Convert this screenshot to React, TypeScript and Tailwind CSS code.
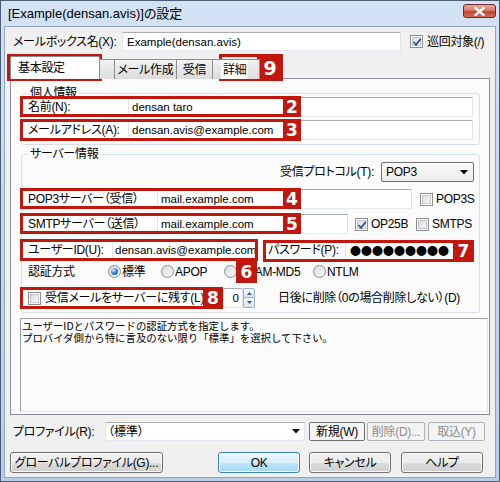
import React from 'react';

const red = 'border-[#c2170d]';

const Box: React.FC<{ className: string }> = ({ className }) => (
  <div className={`pointer-events-none absolute border-[3px] ${red} ${className}`} />
);

const Badge: React.FC<{ n: string; className: string }> = ({ n, className }) => (
  <div
    className={`pointer-events-none absolute flex items-center justify-center bg-[#c2170d] text-white font-bold tracking-normal [font-family:'DejaVu_Sans',sans-serif] ${className}`}
  >
    {n}
  </div>
);

const CheckBox: React.FC<{ checked?: boolean }> = ({ checked }) => (
  <div className="relative h-[13px] w-[13px] shrink-0 border border-[#8f8f8f] bg-white p-[1px]">
    <div className="h-full w-full border border-[#c3c7cc] bg-gradient-to-br from-[#dadcdf] to-[#f9f9f9]" />
    {checked && (
      <svg className="absolute left-[1px] top-[1px]" width="10" height="10" viewBox="0 0 10 10">
        <path d="M1.5 5 L4 7.8 L8.8 1.8" fill="none" stroke="#2b4f9e" strokeWidth="1.8" />
      </svg>
    )}
  </div>
);

const Radio: React.FC<{ checked?: boolean }> = ({ checked }) => (
  <div className="flex h-[13px] w-[13px] shrink-0 items-center justify-center rounded-full border border-[#8a8c8e] bg-gradient-to-br from-[#d9dadc] to-[#fbfbfb]">
    {checked && (
      <div className="h-[7px] w-[7px] rounded-full bg-[radial-gradient(circle_at_35%_30%,#d6f0ff_0%,#3d8fe0_45%,#0c3f8c_100%)]" />
    )}
  </div>
);

const Field: React.FC<{ className?: string; children?: React.ReactNode }> = ({ className, children }) => (
  <div
    className={`flex h-full items-center overflow-hidden whitespace-nowrap border border-[#abadb3] border-l-[#e2e3ea] border-r-[#e2e3ea] border-b-[#e3e9ef] bg-white text-[11.5px] tracking-normal ${className ?? ''}`}
  >
    {children}
  </div>
);

const Btn: React.FC<{ className?: string; children: React.ReactNode; primary?: boolean }> = ({
  className,
  children,
  primary,
}) => (
  <div
    className={`flex items-center justify-center whitespace-nowrap rounded-[3px] border shadow-[inset_0_0_0_1px_#fcfcfc] ${
      primary
        ? 'border-[#3c7fb1] bg-[linear-gradient(#eaf6fd_0%,#d9f0fc_50%,#bee6fd_50%,#a7d9f5_100%)]'
        : 'border-[#707070] bg-[linear-gradient(#f2f2f2_0%,#ebebeb_50%,#dddddd_50%,#cfcfcf_100%)]'
    } ${className ?? ''}`}
  >
    {children}
  </div>
);

const SmallBtn: React.FC<{ children: React.ReactNode; disabled?: boolean; className?: string }> = ({
  children,
  disabled,
  className,
}) => (
  <div
    className={`flex h-[19px] items-center justify-center whitespace-nowrap rounded-[2px] border ${
      disabled ? 'border-[#adb2b5] bg-[#f4f4f4] text-[#8d8d8d]' : 'border-[#707070] bg-[#f6f6f6]'
    } ${className ?? ''}`}
  >
    {children}
  </div>
);

const Group: React.FC<{ title: string; className: string; children: React.ReactNode }> = ({
  title,
  className,
  children,
}) => (
  <div className={`relative ml-[10px] w-[459px] rounded-[3px] border border-[#d5dfe5] ${className}`}>
    <span className="absolute -top-[8px] left-[6px] bg-[#fbfbfb] px-[2px] leading-[14px]">{title}</span>
    {children}
  </div>
);

const Arrow = () => (
  <svg width="8" height="5" viewBox="0 0 8 5">
    <path d="M0 0 H8 L4 4.5 Z" fill="#000" />
  </svg>
);

export default function App() {
  return (
    <div className="relative h-[482px] w-[500px] overflow-hidden border border-[#4b5d74] bg-gradient-to-b from-[#d3e2f4] to-[#b8cde8] text-[12px] leading-[14px] tracking-[-0.3px] text-black [font-family:'Liberation_Sans','Noto_Sans_CJK_JP',sans-serif] [font-feature-settings:'palt']">
      {/* title bar */}
      <div className="flex h-[25px] items-start justify-between pl-[7px] pr-[3px]">
        <span className="mt-[5px] text-[13px] leading-[15px] tracking-normal">[Example(densan.avis)]の設定</span>
        <div className="mt-[3px] flex h-[14px] w-[33px] items-center justify-center rounded-[3px] border border-[#6e2a22] bg-[linear-gradient(#e9aaa0_0%,#d77a69_45%,#c2432e_55%,#d86a4f_100%)]">
          <svg width="11" height="9" viewBox="0 0 11 9">
            <path d="M1.5 1 L9.5 8 M9.5 1 L1.5 8" stroke="#fff" strokeWidth="2.4" strokeLinecap="square" />
          </svg>
        </div>
      </div>

      {/* body */}
      <div className="mx-[3px] h-[452px] border border-[#8ea4bf] bg-[#f0f0f0]">
        {/* mailbox name */}
        <div className="mt-[5px] flex h-[19px] items-center">
          <span className="w-[117px] whitespace-nowrap pl-[8px]">メールボックス名(X):</span>
          <Field className="w-[279px] pl-[4px]">Example(densan.avis)</Field>
          <div className="ml-[9px]">
            <CheckBox checked />
          </div>
          <span className="ml-[4px] whitespace-nowrap">巡回対象(/)</span>
        </div>

        {/* tabs */}
        <div className="relative z-10 -mb-[1px] ml-[5px] mt-[5px] flex h-[23px] items-end whitespace-nowrap">
          <div className="flex h-[23px] w-[90px] items-center rounded-t-[2px] border border-b-0 border-[#898c95] bg-white pl-[7px]">
            基本設定
          </div>
          <div className="-ml-[1px] h-[20px] w-[16px] border border-b-0 border-[#898c95] bg-[linear-gradient(#f2f2f2,#dcdcdc)]" />
          <div className="-ml-[1px] flex h-[20px] w-[63px] items-center justify-center border border-b-0 border-[#898c95] bg-[linear-gradient(#f2f2f2,#dcdcdc)]">
            メール作成
          </div>
          <div className="-ml-[1px] flex h-[20px] w-[37px] items-center justify-center border border-b-0 border-[#898c95] bg-[linear-gradient(#f2f2f2,#dcdcdc)]">
            受信
          </div>
          <div className="-ml-[1px] flex h-[20px] w-[48px] items-center border border-b-0 border-[#898c95] bg-[linear-gradient(#f2f2f2,#dcdcdc)] pl-[8px]">
            <span className="flex h-full items-center bg-white px-[2px]">詳細</span>
          </div>
        </div>

        {/* tab page */}
        <div className="ml-[5px] flex h-[337px] w-[480px] flex-col whitespace-nowrap border border-[#898c95] bg-[#fbfbfb]">
          <Group title="個人情報" className="mt-[14px] h-[52px]">
            <div className="mt-[3px] flex h-[20px]">
              <span className="flex w-[106px] items-center bg-white pl-[6px]">名前(N):</span>
              <Field className="w-[345px] pl-[3px]">densan taro</Field>
            </div>
            <div className="mt-[3px] flex h-[20px]">
              <span className="flex w-[106px] items-center bg-white pl-[6px]">メールアドレス(A):</span>
              <Field className="w-[345px] pl-[3px]">densan.avis@example.com</Field>
            </div>
          </Group>

          <Group title="サーバー情報" className="mt-[9px] h-[159px]">
            <div className="mt-[7px] flex h-[20px] items-center justify-end pr-[5px]">
              <span className="mr-[7px]">受信プロトコル(T):</span>
              <div className="flex h-[20px] w-[93px] items-center justify-between rounded-[2px] border border-[#707070] bg-[linear-gradient(#fbfbfb,#ececec)] pl-[4px] pr-[5px]">
                POP3
                <Arrow />
              </div>
            </div>

            <div className="mt-[7px] flex h-[20px] items-center">
              <span className="flex h-full w-[135px] items-center bg-white pl-[6px]">POP3サーバー（受信）</span>
              <Field className="w-[255px] pl-[3px]">mail.example.com</Field>
              <div className="ml-[8px]">
                <CheckBox />
              </div>
              <span className="ml-[3px]">POP3S</span>
            </div>

            <div className="mt-[5px] flex h-[20px] items-center">
              <span className="flex h-full w-[135px] items-center bg-white pl-[6px]">SMTPサーバー（送信）</span>
              <Field className="w-[191px] pl-[3px]">mail.example.com</Field>
              <div className="ml-[7px]">
                <CheckBox checked />
              </div>
              <span className="ml-[3px] w-[45px]">OP25B</span>
              <CheckBox />
              <span className="ml-[3px]">SMTPS</span>
            </div>

            <div className="mt-[6px] flex h-[20px] items-center">
              <span className="flex h-full w-[90px] items-center bg-white pl-[6px]">ユーザーID(U):</span>
              <Field className="w-[144px] pl-[2px] tracking-[-0.2px]">densan.avis@example.com</Field>
              <span className="ml-[9px] flex h-full w-[80px] items-center bg-white pl-[3px]">パスワード(P):</span>
              <Field className="w-[125px] pl-[4px] text-[11px] [font-family:'Noto_Sans_CJK_JP',sans-serif] [font-feature-settings:normal]">
                ●●●●●●●●●
              </Field>
            </div>

            <div className="mt-[3px] flex h-[17px] items-center">
              <span className="w-[86px] pl-[6px]">認証方式</span>
              <div className="flex w-[53px] items-center gap-[1px]">
                <Radio checked />
                標準
              </div>
              <div className="flex w-[63px] items-center gap-[1px]">
                <Radio />
                APOP
              </div>
              <div className="flex w-[89px] items-center gap-[1px]">
                <Radio />
                CRAM-MD5
              </div>
              <div className="flex items-center gap-[1px]">
                <Radio />
                NTLM
              </div>
            </div>

            <div className="mt-[8px] flex h-[20px] items-center">
              <div className="flex h-full w-[181px] items-center overflow-hidden bg-white pl-[6px]">
                <CheckBox />
                <span className="ml-[4px]">受信メールをサーバーに残す(L)</span>
              </div>
              <Field className="ml-[20px] w-[20px] justify-end pr-[3px]">0</Field>
              <div className="flex h-full w-[12px] flex-col">
                <div className="flex h-1/2 items-center justify-center rounded-t-[2px] border border-[#9fb1c5] bg-[linear-gradient(#f4f8fb,#dbe5ee)]">
                  <svg width="5" height="3" viewBox="0 0 5 3">
                    <path d="M0 3 L2.5 0 L5 3 Z" fill="#2f5a94" />
                  </svg>
                </div>
                <div className="flex h-1/2 items-center justify-center rounded-b-[2px] border border-t-0 border-[#9fb1c5] bg-[linear-gradient(#f4f8fb,#dbe5ee)]">
                  <svg width="5" height="3" viewBox="0 0 5 3">
                    <path d="M0 0 L5 0 L2.5 3 Z" fill="#2f5a94" />
                  </svg>
                </div>
              </div>
              <span className="ml-[23px]">日後に削除（0の場合削除しない）(D)</span>
            </div>
          </Group>

          <div className="ml-[9px] mt-[5px] h-[94px] w-[468px] border border-[#a0a0a0] border-b-[#e3e3e3] border-r-[#e3e3e3] pl-[1px] pt-[1px] text-[10.4px] leading-[12px] tracking-normal [font-family:'Noto_Sans_CJK_JP',sans-serif] [font-feature-settings:normal]">
            <p>ユーザーIDとパスワードの認証方式を指定します。</p>
            <p>プロバイダ側から特に言及のない限り「標準」を選択して下さい。</p>
          </div>
        </div>

        {/* profile */}
        <div className="mt-[7px] flex h-[19px] items-center whitespace-nowrap">
          <span className="w-[100px] pl-[8px]">プロファイル(R):</span>
          <Field className="w-[200px] justify-between pl-[2px] pr-[4px] text-[12px]">
            （標準）
            <Arrow />
          </Field>
          <SmallBtn className="ml-[4px] w-[56px]">新規(W)</SmallBtn>
          <SmallBtn disabled className="ml-[2px] w-[58px]">
            削除(D)...
          </SmallBtn>
          <SmallBtn disabled className="ml-[3px] w-[57px]">
            取込(Y)
          </SmallBtn>
        </div>

        {/* buttons */}
        <div className="mt-[11px] flex h-[21px]">
          <Btn className="ml-[5px] w-[153px]">グローバルプロファイル(G)...</Btn>
          <Btn primary className="ml-[55px] w-[82px]">
            OK
          </Btn>
          <Btn className="ml-[9px] w-[82px]">キャンセル</Btn>
          <Btn className="ml-[10px] w-[82px]">ヘルプ</Btn>
        </div>
      </div>

      {/* annotations */}
      <Box className="left-[6px] top-[53px] h-[27px] w-[95px]" />
      <Badge n="1" className="left-[74px] top-[53px] h-[27px] w-[27px] text-[19px]" />
      <Box className="left-[218px] top-[53px] h-[27px] w-[64px]" />
      <Badge n="9" className="left-[256px] top-[53px] h-[27px] w-[26px] text-[19px]" />
      <Box className="left-[19px] top-[95px] h-[21px] w-[281px]" />
      <Badge n="2" className="left-[282px] top-[95px] h-[21px] w-[18px] text-[17px]" />
      <Box className="left-[19px] top-[118px] h-[22px] w-[281px]" />
      <Badge n="3" className="left-[282px] top-[118px] h-[22px] w-[18px] text-[17px]" />
      <Box className="left-[19px] top-[187px] h-[21px] w-[281px]" />
      <Badge n="4" className="left-[282px] top-[187px] h-[21px] w-[18px] text-[17px]" />
      <Box className="left-[19px] top-[212px] h-[21px] w-[281px]" />
      <Badge n="5" className="left-[282px] top-[212px] h-[21px] w-[18px] text-[17px]" />
      <Box className="left-[19px] top-[238px] h-[22px] w-[238px]" />
      <Badge n="6" className="left-[235px] top-[259px] h-[23px] w-[21px] text-[17px]" />
      <Box className="left-[262px] top-[239px] h-[22px] w-[211px]" />
      <Badge n="7" className="left-[452px] top-[239px] h-[22px] w-[21px] text-[17px]" />
      <Box className="left-[19px] top-[286px] h-[22px] w-[203px]" />
      <Badge n="8" className="left-[202px] top-[286px] h-[22px] w-[20px] text-[17px]" />
    </div>
  );
}
